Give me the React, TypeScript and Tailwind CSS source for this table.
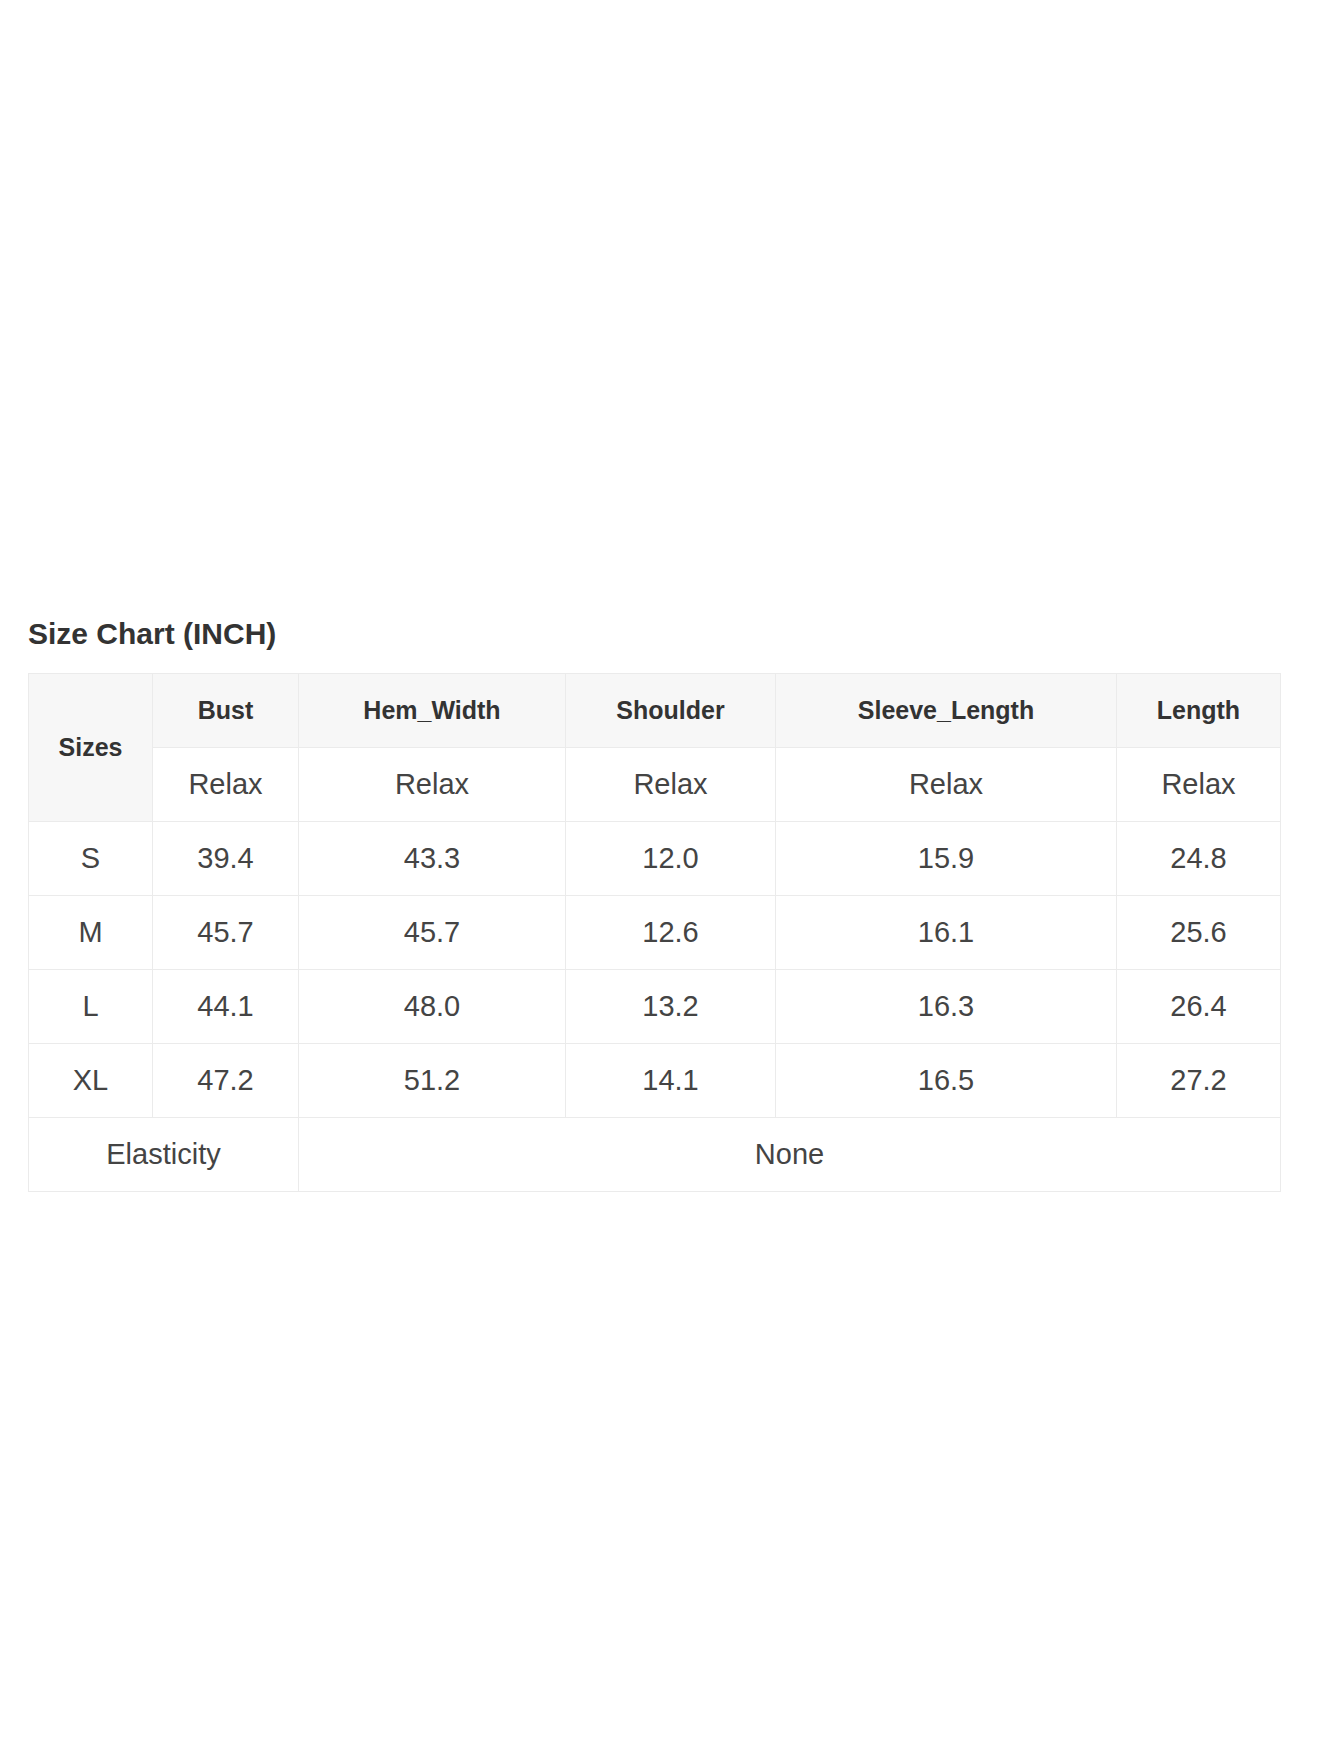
import React from 'react';

// Size chart data (inches)
const rows = [
  { size: 'S', bust: '39.4', hem: '43.3', shoulder: '12.0', sleeve: '15.9', length: '24.8' },
  { size: 'M', bust: '45.7', hem: '45.7', shoulder: '12.6', sleeve: '16.1', length: '25.6' },
  { size: 'L', bust: '44.1', hem: '48.0', shoulder: '13.2', sleeve: '16.3', length: '26.4' },
  { size: 'XL', bust: '47.2', hem: '51.2', shoulder: '14.1', sleeve: '16.5', length: '27.2' },
];

const headers = ['Bust', 'Hem_Width', 'Shoulder', 'Sleeve_Length', 'Length'];

const cell = 'border border-[#ebebeb] text-center align-middle p-0';
const headCell = `${cell} bg-[#f7f7f7] text-[25px] font-bold text-[#333333]`;
const bodyCell = `${cell} text-[29px] text-[#444444]`;

const App: React.FC = () => {
  return (
    <div
      className="w-[1320px] min-h-[1760px] bg-white pt-[616px] px-[28px]"
      style={{ fontFamily: '"Liberation Sans", Arial, sans-serif' }}
    >
      {/* Title */}
      <h2 className="text-[30px] font-bold leading-[36px] text-[#333333] mb-[21px]">Size Chart (INCH)</h2>

      {/* Table */}
      <table className="border-collapse table-fixed w-[1252px]">
        <colgroup>
          <col className="w-[124px]" />
          <col className="w-[146px]" />
          <col className="w-[267px]" />
          <col className="w-[210px]" />
          <col className="w-[341px]" />
          <col className="w-[164px]" />
        </colgroup>
        <tbody>
          <tr className="h-[74px]">
            <td rowSpan={2} className={headCell}>Sizes</td>
            {headers.map(h => (
              <td key={h} className={headCell}>{h}</td>
            ))}
          </tr>
          <tr className="h-[74px]">
            {headers.map(h => (
              <td key={h} className={bodyCell}>Relax</td>
            ))}
          </tr>
          {rows.map(r => (
            <tr key={r.size} className="h-[74px]">
              <td className={bodyCell}>{r.size}</td>
              <td className={bodyCell}>{r.bust}</td>
              <td className={bodyCell}>{r.hem}</td>
              <td className={bodyCell}>{r.shoulder}</td>
              <td className={bodyCell}>{r.sleeve}</td>
              <td className={bodyCell}>{r.length}</td>
            </tr>
          ))}
          <tr className="h-[74px]">
            <td colSpan={2} className={bodyCell}>Elasticity</td>
            <td colSpan={4} className={bodyCell}>None</td>
          </tr>
        </tbody>
      </table>
    </div>
  );
};

export default App;
